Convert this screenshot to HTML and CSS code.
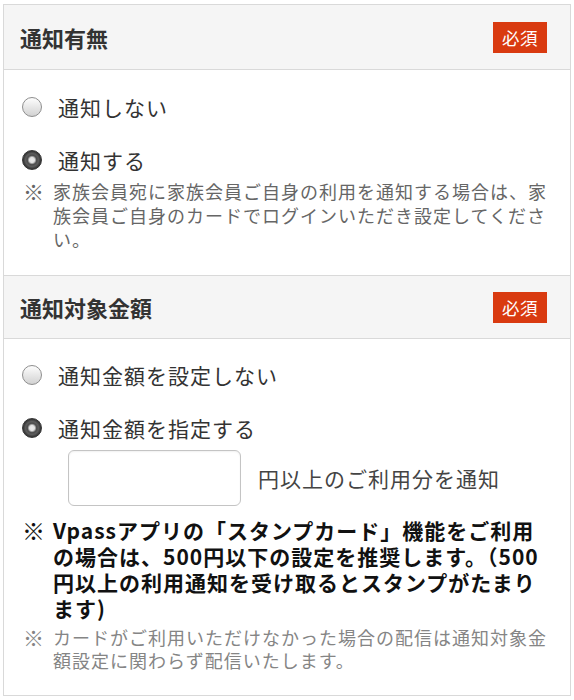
FILE: index.html
```html
<!DOCTYPE html>
<html lang="ja">
<head>
<meta charset="utf-8">
<title>通知設定</title>
<link rel="stylesheet" href="styles.css">
</head>
<body>
<div class="panel">
  <section class="section">
    <div class="section-head">
      <h2 class="section-title">通知有無</h2>
      <span class="badge">必須</span>
    </div>
    <div class="section-body body-first">
      <label class="radio-row">
        <input type="radio" name="notify" class="radio">
        <span class="radio-label">通知しない</span>
      </label>
      <label class="radio-row">
        <input type="radio" name="notify" class="radio" checked>
        <span class="radio-label">通知する</span>
      </label>
      <p class="note note-sub">
        <span class="note-mark">※</span>
        <span class="note-text">家族会員宛に家族会員ご自身の利用を通知する場合は、家族会員ご自身のカードでログインいただき設定してください。</span>
      </p>
    </div>
  </section>
  <section class="section section-next">
    <div class="section-head head-second">
      <h2 class="section-title">通知対象金額</h2>
      <span class="badge">必須</span>
    </div>
    <div class="section-body body-second">
      <label class="radio-row">
        <input type="radio" name="amount" class="radio">
        <span class="radio-label">通知金額を設定しない</span>
      </label>
      <label class="radio-row">
        <input type="radio" name="amount" class="radio" checked>
        <span class="radio-label">通知金額を指定する</span>
      </label>
      <div class="amount-row">
        <input type="text" class="amount-input" aria-label="通知金額">
        <span class="amount-text">円以上のご利用分を通知</span>
      </div>
      <p class="note note-strong">
        <span class="note-mark">※</span>
        <span class="note-text">Vpassアプリの「スタンプカード」機能をご利用の場合は、500円以下の設定を推奨します。（500円以上の利用通知を受け取るとスタンプがたまります)</span>
      </p>
      <p class="note note-light">
        <span class="note-mark">※</span>
        <span class="note-text">カードがご利用いただけなかった場合の配信は通知対象金額設定に関わらず配信いたします。</span>
      </p>
    </div>
  </section>
</div>
</body>
</html>
```
FILE: styles.css
```css
* { box-sizing: border-box; }

html, body {
  margin: 0;
  padding: 0;
  background: #ffffff;
}

body {
  font-family: "Noto Sans CJK JP", "Noto Sans", sans-serif;
  color: #333333;
}

.panel {
  margin: 4px 3px 0 3px;
  border: 1px solid #d9d9d9;
  background: #ffffff;
}

.section-next {
  border-top: 1px solid #d9d9d9;
}

.section-head {
  display: flex;
  align-items: center;
  justify-content: space-between;
  height: 65px;
  padding: 0 23px 0 16px;
  background: #f5f5f5;
  border-bottom: 1px solid #d9d9d9;
}

.head-second {
  height: 63px;
}

.section-title {
  margin: 0;
  font-size: 22px;
  line-height: 30px;
  font-weight: bold;
  color: #333333;
}

.badge {
  display: flex;
  align-items: center;
  justify-content: center;
  width: 54px;
  height: 31px;
  background: #d93a10;
  color: #ffffff;
  font-size: 17.5px;
  letter-spacing: 0.5px;
}

.section-body {
  padding: 21px 17px 24px 18px;
  display: flex;
  flex-direction: column;
}

.body-second {
  padding-top: 20px;
  padding-bottom: 24px;
}

.radio-row {
  display: flex;
  align-items: center;
  height: 32px;
  gap: 16px;
}

.radio-row + .radio-row {
  margin-top: 21px;
}

.radio {
  appearance: none;
  -webkit-appearance: none;
  margin: 0;
  flex: none;
  width: 20px;
  height: 20px;
  border-radius: 50%;
  border: 1.5px solid #8e8e8e;
  background: linear-gradient(#fdfdfd, #d2d2d2);
}

.radio:checked {
  border-color: #333333;
  background: radial-gradient(circle, #ececec 0, #e0e0e0 2.6px, #9a9a9a 3.6px, #4c4c4c 4.6px, #5c5c5c 6.5px, #3a3a3a 8.5px);
}

.radio-label {
  font-size: 21px;
  letter-spacing: 1px;
  line-height: 32px;
  color: #333333;
}

.note {
  display: flex;
  margin: 0;
}

.note-mark {
  flex: none;
  width: 31px;
}

.note-text {
  flex: 1;
  min-width: 0;
}

.note-sub {
  margin-top: 3px;
  font-size: 18px;
  letter-spacing: 1px;
  line-height: 24px;
  color: #666666;
}

.note-sub .note-mark,
.note-light .note-mark {
  padding-left: 1px;
  font-size: 21px;
}

.amount-row {
  display: flex;
  align-items: center;
  margin-top: 6px;
  padding-left: 46px;
  gap: 17px;
}

.amount-input {
  width: 173px;
  height: 56px;
  margin: 0;
  border: 1px solid #c4c4c4;
  border-radius: 6px;
  background: #ffffff;
  box-shadow: inset 0 1px 2px rgba(0, 0, 0, 0.06);
  font: inherit;
}

.amount-text {
  font-size: 21px;
  letter-spacing: 1px;
  color: #444444;
}

.note-strong {
  margin-top: 11px;
  font-size: 21px;
  letter-spacing: 1px;
  line-height: 26px;
  font-weight: bold;
  color: #111111;
}

.note-strong .note-mark {
  font-size: 23px;
}

.note-light {
  margin-top: 5px;
  font-size: 18px;
  letter-spacing: 1px;
  line-height: 22.5px;
  color: #858585;
}
```
